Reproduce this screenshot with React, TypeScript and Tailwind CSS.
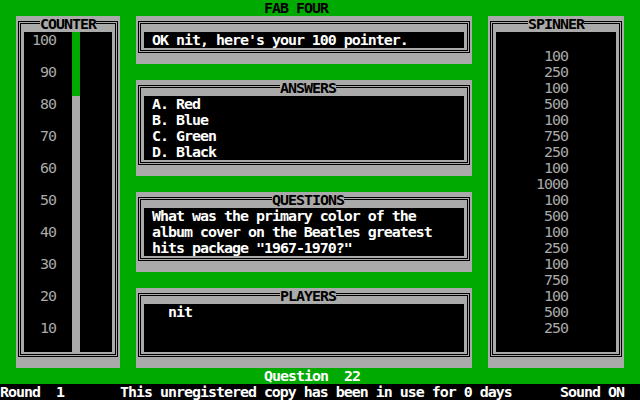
import type { ReactNode } from "react";

const SPINNER = [100, 250, 100, 500, 100, 750, 250, 100, 1000, 100, 500, 100, 250, 100, 750, 100, 500, 250];
const COUNTER = [100, 90, 80, 70, 60, 50, 40, 30, 20, 10];

// Gray slab with a double black frame; content area is black and starts one
// text cell (8x16) in from the slab edge, the title sits over the top lines.
function Panel({
  title,
  titleClass = "",
  className = "",
  children,
}: {
  title?: string;
  titleClass?: string;
  className?: string;
  children?: ReactNode;
}) {
  return (
    <div className={`relative bg-[#aaaaaa] px-[2px] pt-[5px] pb-[11px] ${className}`}>
      <div className="flex h-full flex-col border border-black p-px">
        <div className="flex flex-1 flex-col border border-black px-[3px] pt-2 pb-[2px]">
          <div className="flex-1 bg-black">{children}</div>
        </div>
      </div>
      {title && (
        <span className={`absolute top-0 h-4 bg-[#aaaaaa] font-bold text-black ${titleClass}`}>
          {title}
        </span>
      )}
    </div>
  );
}

export default function App() {
  return (
    <div className="flex h-[400px] w-[640px] flex-col overflow-hidden bg-[#00aa00] font-['DejaVu_Sans_Mono',monospace] text-[14.95px] leading-4 tracking-[-1px] whitespace-pre">
      <div className="h-4 pl-[264px] font-bold text-black">FAB FOUR</div>

      <div className="flex h-[352px] gap-4 px-4">
        {/* counter */}
        <Panel title="COUNTER" titleClass="left-[24px]" className="w-[104px]">
          <div className="flex h-full">
            <div className="flex w-12 flex-col pr-4 text-right text-[#aaaaaa]">
              {COUNTER.map((n) => (
                <div key={n} className="h-8">
                  {n}
                </div>
              ))}
            </div>
            <div className="flex w-2 flex-col">
              <div className="h-16 bg-[#00aa00]" />
              <div className="flex-1 bg-[#aaaaaa]" />
            </div>
            <div className="flex-1" />
          </div>
        </Panel>

        {/* middle column */}
        <div className="flex w-[336px] flex-col gap-4">
          <Panel className="h-12">
            <div className="pl-2 font-bold text-white">OK nit, here's your 100 pointer.</div>
          </Panel>
          <Panel title="ANSWERS" titleClass="left-[144px]" className="h-24">
            <div className="flex flex-col pl-2 font-bold text-white">
              <div>A. Red</div>
              <div>B. Blue</div>
              <div>C. Green</div>
              <div>D. Black</div>
            </div>
          </Panel>
          <Panel title="QUESTIONS" titleClass="left-[136px]" className="h-20">
            <div className="flex flex-col pl-2 font-bold text-white">
              <div>What was the primary color of the</div>
              <div>album cover on the Beatles greatest</div>
              <div>hits package "1967-1970?"</div>
            </div>
          </Panel>
          <Panel title="PLAYERS" titleClass="left-[144px]" className="h-20">
            <div className="pl-6 font-bold text-white">nit</div>
          </Panel>
        </div>

        {/* spinner */}
        <Panel title="SPINNER" titleClass="left-[40px]" className="w-[136px]">
          <div className="flex flex-col pt-4 pr-12 text-right text-[#aaaaaa]">
            {SPINNER.map((n, i) => (
              <div key={i}>{n}</div>
            ))}
          </div>
        </Panel>
      </div>

      <div className="h-4 pl-[264px] font-bold text-white">Question  22</div>

      <div className="flex h-4 bg-black font-bold text-white">
        <div className="w-[120px]">Round  1</div>
        <div className="w-[440px]">This unregistered copy has been in use for 0 days</div>
        <div>Sound ON</div>
      </div>
    </div>
  );
}
